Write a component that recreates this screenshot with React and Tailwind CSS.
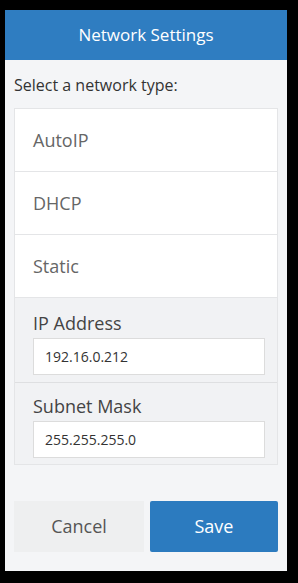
export default function App() {
  return (
    <div className="min-h-[583px] w-[298px] bg-black pt-[10px] pl-[5px]" style={{ fontFamily: '"Open Sans", sans-serif' }}>
      <div className="w-[282px] h-[561px] bg-[#f4f5f7] flex flex-col">
        <div className="h-[50px] bg-[#2f7dc1] flex items-center justify-center">
          <span className="text-[17px] text-white">Network Settings</span>
        </div>
        <p className="mt-[13px] ml-[9px] text-[16px] leading-[24px] text-[#333]">Select a network type:</p>
        <div className="mt-[11px] mx-[9px] border border-[#e4e5e7] bg-white">
          {["AutoIP", "DHCP", "Static"].map((t) => (
            <div key={t} className="h-[63px] border-b border-[#e4e5e7] flex items-center pl-[18px] text-[18px] text-[#666]">
              {t}
            </div>
          ))}
          <div className="bg-[#f1f2f4] pl-[18px] pr-[12px] pt-[13px] pb-[6px]">
            <div className="text-[18px] text-[#444] leading-[24px]">IP Address</div>
            <div className="mt-[3px] h-[37px] bg-white border border-[#dcdcdc] flex items-center pl-[11px] text-[14px] text-[#333]">
              192.16.0.212
            </div>
            <div className="-ml-[18px] -mr-[12px] mt-[7px] border-t border-[#dedfe1]" />
            <div className="mt-[11px] text-[18px] text-[#444] leading-[24px]">Subnet Mask</div>
            <div className="mt-[3px] h-[37px] bg-white border border-[#dcdcdc] flex items-center pl-[11px] text-[14px] text-[#333]">
              255.255.255.0
            </div>
          </div>
        </div>
        <div className="mt-[36px] mx-[9px] flex gap-[6px]">
          <button className="w-[130px] h-[51px] bg-[#eeeff0] text-[18px] text-[#555]">Cancel</button>
          <button className="flex-1 h-[51px] bg-[#2c7bbf] rounded-[2px] text-[18px] text-white">Save</button>
        </div>
      </div>
    </div>
  );
}
